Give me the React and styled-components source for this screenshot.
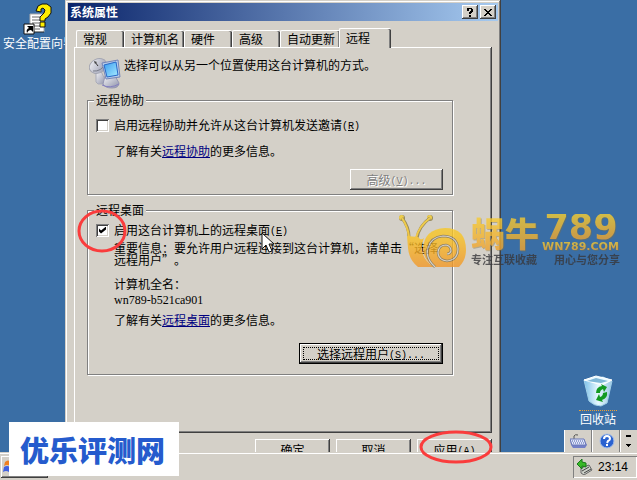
import React, { useState } from 'react';
import styled, { createGlobalStyle, css } from 'styled-components';

const App = () => {
  const [assist, setAssist] = useState(false);
  const [desktop, setDesktop] = useState(true);

  return (
    <Screen>
      <GlobalStyle />
      <Desktop>
        <IconColumn>
          <WizardIcon />
          <IconLabel>安全配置向导</IconLabel>
        </IconColumn>

        <Dialog role="dialog" aria-labelledby="dialog-title">
          <TitleBar>
            <Title id="dialog-title">系统属性</Title>
            <TitleButton aria-label="帮助">
              <svg width="8" height="9" shapeRendering="crispEdges">
                <path d="M1 0h5v1h1v3h-1v1h-1v1h-2v-2h1v-1h1v-2h-2v2h-2z M3 7h2v2h-2z" />
              </svg>
            </TitleButton>
            <TitleButton aria-label="关闭">
              <svg width="8" height="7" shapeRendering="crispEdges">
                <path d="M0 0h2v1h1v1h2v-1h1v-1h2v1h-1v1h-1v1h-1v1h1v1h1v1h1v1h-2v-1h-1v-1h-2v1h-1v1h-2v-1h1v-1h1v-1h1v-1h-1v-1h-1v-1h-1z" />
              </svg>
            </TitleButton>
          </TitleBar>

          <Tabs role="tablist">
            {['常规', '计算机名', '硬件', '高级', '自动更新', '远程'].map((name) => (
              <Tab key={name} role="tab" $active={name === '远程'} aria-selected={name === '远程'}>
                {name}
              </Tab>
            ))}
          </Tabs>

          <Panel role="tabpanel">
            <Intro>
              <RemoteIcon />
              <Line>选择可以从另一个位置使用这台计算机的方式。</Line>
            </Intro>

            <Group>
              <Legend>远程协助</Legend>
              <AssistBody>
                <CheckLabel>
                  <Check type="checkbox" checked={assist} onChange={() => setAssist(!assist)} />
                  <span>启用远程协助并允许从这台计算机发送邀请<Ascii>(<u>R</u>)</Ascii></span>
                </CheckLabel>
                <Line $indent>了解有关<Link href="#assist">远程协助</Link>的更多信息。</Line>
                <GroupButton disabled $width="93px">高级<Ascii>(<u>V</u>)...</Ascii></GroupButton>
              </AssistBody>
            </Group>

            <Group>
              <Legend>远程桌面</Legend>
              <DesktopBody>
                <CheckLabel>
                  <Check type="checkbox" checked={desktop} onChange={() => setDesktop(!desktop)} />
                  <span>启用这台计算机上的远程桌面<Ascii>(<u>E</u>)</Ascii></span>
                </CheckLabel>
                <Notice>重要信息：要允许用户远程连接到这台计算机，请单击“选择远程用户”。</Notice>
                <ComputerName>
                  <Line $indent>计算机全名：</Line>
                  <HostName>wn789-b521ca901</HostName>
                </ComputerName>
                <Line $indent>了解有关<Link href="#desktop">远程桌面</Link>的更多信息。</Line>
                <GroupButton $focused $width="144px">选择远程用户<Ascii>(<u>S</u>)...</Ascii></GroupButton>
              </DesktopBody>
            </Group>
          </Panel>

          <Actions>
            <Button $width="75px">确定</Button>
            <Button $width="75px">取消</Button>
            <Button $width="75px">应用<Ascii>(<u>A</u>)</Ascii></Button>
          </Actions>
        </Dialog>

        <TrayColumn>
          <Recycle>
            <BinIcon />
            <BinLabel>回收站</BinLabel>
          </Recycle>
          <LanguageBar>
            <LangButton aria-label="键盘"><KeyboardIcon /></LangButton>
            <LangButton aria-label="帮助"><HelpIcon /></LangButton>
            <LangMenu aria-label="选项">
              <svg width="6" height="13" shapeRendering="crispEdges">
                <path d="M0 0h5v2h-5z M0 9h5v1h-1v1h-1v1h-1v-1h-1v-1h-1z" />
              </svg>
            </LangMenu>
          </LanguageBar>
        </TrayColumn>
      </Desktop>

      <Taskbar>
        <StartButton aria-label="开始">
          <svg width="16" height="16" viewBox="0 0 16 16">
            <path d="M2 3q3-3 6 0l-1 4q-3-2-6 0z" fill="#f08020" />
            <path d="M9 3q3 2 6 0l-1 4q-3 2-6 0z" fill="#50b040" />
            <path d="M1 8q3-2 6 0l-1 5q-3-2-6 0z" fill="#4060e0" />
            <path d="M8 8q3 2 6 0l-1 5q-3 2-6 0z" fill="#f0c020" />
          </svg>
        </StartButton>
        <Clock>
          <SafeRemoveIcon />
          <Time>23:14</Time>
        </Clock>
      </Taskbar>

      <Watermark>
        <Snail />
        <Brand>蜗牛</Brand>
        <BrandSide>
          <BrandNumber>789</BrandNumber>
          <BrandUrl>WN789.COM</BrandUrl>
        </BrandSide>
        <Motto $first>专注互联收藏</Motto>
        <Motto>用心与您分享</Motto>
      </Watermark>

      <CheckRing />
      <ApplyRing />
      <Pointer width="14" height="22" viewBox="0 0 14 22">
        <path d="M1 1v16l4-4 3 7 3-1-3-7h5z" fill="#fff" stroke="#111" />
      </Pointer>
      <SiteBadge>优乐评测网</SiteBadge>
    </Screen>
  );
};

const WizardIcon = () => (
  <svg width="32" height="32" viewBox="0 0 32 32">
    <path d="M7 11h14v18H7z" fill="#fff" />
    <path d="M7 29V11h14v18" fill="none" stroke="#aaa" />
    <path d="M9 14h8M9 17h9M9 20h7M9 23h9M12 26h5" stroke="#666" />
    <path d="M21 29H9" stroke="#222" />
    <path d="M13 8l2-5 4-2h5l4 3v6l-3 4-3 2v2h-5v-4l4-4 1-3-2-2-2 1v3z" fill="#ffee00" stroke="#111" />
    <path d="M17 19h5v5h-5z" fill="#ffee00" stroke="#111" />
    <path d="M1 21h10v10H1z" fill="#fff" stroke="#111" />
    <path d="M4 30c-1-3 0-4 2-5l-2-2h6v6l-2-2c-2 0-3 1-4 3z" fill="#000" />
  </svg>
);

const RemoteIcon = () => (
  <svg width="32" height="32" viewBox="0 0 32 32">
    <defs>
      <linearGradient id="metal" x1="0" y1="0" x2="1" y2="1">
        <stop offset="0" stopColor="#f6f6f8" />
        <stop offset="1" stopColor="#8c90a8" />
      </linearGradient>
      <linearGradient id="glass" x1="0" y1="0" x2="1" y2="1">
        <stop offset="0" stopColor="#3a9cf0" />
        <stop offset="1" stopColor="#a8ecff" />
      </linearGradient>
    </defs>
    <path d="M7 15l5-1 5 11-3 2H9l-2-2z" fill="url(#metal)" stroke="#a9abb8" />
    <ellipse cx="9" cy="9" rx="9" ry="7" transform="rotate(-25 9 9)" fill="url(#metal)" stroke="#a4a6b2" />
    <path d="M4 14q8 1 13-8" fill="none" stroke="#777b88" />
    <path d="M9 9L6 5" stroke="#333" />
    <path d="M5 4l3 1-2 2z" fill="#444" />
    <path d="M16 19h10l4 7q0 5-7 5t-9-4z" fill="url(#metal)" stroke="#9496b2" />
    <path d="M13 28q8 4 17-1" fill="none" stroke="#8580c0" />
    <path d="M13 6l16-3 2 17-14 2z" fill="#b8cce8" stroke="#7585b8" />
    <path d="M15 8l12-3 2 13-11 2z" fill="url(#glass)" stroke="#2868c8" />
  </svg>
);

const BinIcon = () => (
  <svg width="32" height="32" viewBox="0 0 32 32">
    <defs>
      <linearGradient id="bin" x1="0" y1="0" x2="1" y2="0">
        <stop offset="0" stopColor="#7cc0e8" />
        <stop offset="0.5" stopColor="#e6f8ff" />
        <stop offset="1" stopColor="#9cc8e4" />
      </linearGradient>
    </defs>
    <path d="M2 5l5 21q5 5 12 5l6-3 5-22-9-4z" fill="url(#bin)" stroke="#9fcfe8" />
    <path d="M2 5L14 1l16 4-10 5z" fill="#eafaff" stroke="#fff" />
    <path d="M5 6l9-3 12 3-7 2z" fill="#80b8d8" />
    <path d="M14 18q0-6 6-7l-1-2 6 3-3 5-1-3q-3 1-3 4z" fill="#129a22" />
    <path d="M25 17q1 6-5 8l1 2-7-2 3-6 1 3q3-1 3-4z" fill="#129a22" />
  </svg>
);

const KeyboardIcon = () => (
  <svg width="17" height="16" viewBox="0 0 17 16">
    <path d="M4 6V3q1-2 4-1" fill="none" stroke="#555" />
    <path d="M0 6h14l3 6-2 3H3l-2-3z" fill="#7480c8" />
    <path d="M0 6h14l2 6H2z" fill="#dfe5fa" stroke="#6a78b8" />
    <path d="M2 8h12M3 10h12" stroke="#4b5ca8" strokeDasharray="1 1" />
  </svg>
);

const HelpIcon = () => (
  <svg width="16" height="16" viewBox="0 0 16 16">
    <circle cx="8" cy="8" r="7" fill="#2a62d0" stroke="#a8c0e8" />
    <path d="M5 6q0-3 3-3t3 3q0 1-2 2l-1 2" fill="none" stroke="#fff" strokeWidth="2" />
    <path d="M7 11h2v2H7z" fill="#fff" />
  </svg>
);

const SafeRemoveIcon = () => (
  <svg width="16" height="16" viewBox="0 0 16 16">
    <path d="M4 9l8-3 3 5-8 5-3-2z" fill="#ccd0c8" stroke="#666" />
    <path d="M5 12l7-4M7 14l7-4" stroke="#444" />
    <path d="M0 5l5-5v3l4 1v4l-4-1v3z" fill="#38b828" stroke="#187818" />
  </svg>
);

const Snail = () => (
  <SnailArt width="68" height="54" viewBox="0 0 68 54">
    <defs>
      <linearGradient id="snail" gradientUnits="userSpaceOnUse" x1="0" y1="0" x2="0" y2="54">
        <stop offset="0" stopColor="#f4cf30" />
        <stop offset="0.4" stopColor="#f9c524" />
        <stop offset="1" stopColor="#f2962a" />
      </linearGradient>
    </defs>
    <circle cx="3" cy="4" r="3" fill="#8a7a40" />
    <circle cx="31" cy="4" r="3" fill="#8a7a40" />
    <circle cx="2.5" cy="3.5" r="2.5" fill="url(#snail)" />
    <circle cx="30.5" cy="3.5" r="2.5" fill="url(#snail)" />
    <path d="M3 4q7 9 7 19M31 4Q20 12 18 24" fill="none" stroke="#8a7a40" strokeWidth="3" />
    <path d="M3 4q6 9 7 19M31 4Q20 12 17 24" fill="none" stroke="url(#snail)" strokeWidth="2" />
    <path d="M8 22l11 1 2 2q2 1 4-1l-2 6q-2 14 12 23H19Q10 46 9 34z" fill="url(#snail)" />
    <path d="M60 53q7-7 7-17 0-22-21-22-21 1-22 21 1 12 12 18z" fill="url(#snail)" />
    <path
      d="M36 53Q26 44 29 34q3-11 15-12 14 0 15 13 0 11-11 12-9-1-9-9 1-7 8-7 5 1 5 6-1 3-4 3"
      fill="none" stroke="#7c6c48" strokeWidth="2.5"
    />
    <path
      d="M36 53Q26 44 29 34q3-11 15-12 14 0 15 13 0 11-11 12-9-1-9-9 1-7 8-7 5 1 5 6-1 3-4 3"
      fill="none" stroke="#d4d0c8" strokeWidth="1.2"
    />
  </SnailArt>
);

const CheckRing = () => (
  <RingLeft width="50" height="44">
    <ellipse cx="25" cy="22" rx="23" ry="20" />
  </RingLeft>
);

const ApplyRing = () => (
  <RingRight width="74" height="34">
    <ellipse cx="37" cy="17" rx="35" ry="15" />
  </RingRight>
);

const GlobalStyle = createGlobalStyle`
  * {
    box-sizing: border-box;
  }
  body {
    margin: 0;
    background: #3a6ea5;
    color: #000;
    font: 12px/16px "Noto Sans CJK SC", sans-serif;
    text-spacing-trim: space-all;
  }
  button {
    margin: 0;
    padding: 0;
    border: 0;
    font: inherit;
    color: inherit;
    background: #d4d0c8;
  }
  svg {
    display: block;
    flex: none;
  }
`

const raised = css`
  box-shadow: inset -1px -1px #404040, inset 1px 1px #fff, inset -2px -2px #808080;
`

const Screen = styled.div`
    position: relative;
    display: flex;
    flex-direction: column;
    height: 100vh;
    overflow: hidden;
`

const Desktop = styled.main`
    flex: 1;
    min-height: 0;
    display: grid;
    grid-template-columns: 65px minmax(0, 1fr) 136px;
    grid-template-rows: minmax(0, 1fr);
    overflow: hidden;
`

const IconColumn = styled.div`
    padding: 3px 0 0 3px;
    overflow: hidden;

    svg {
      margin-left: 20px;
    }
`

const IconLabel = styled.div`
    color: #fff;
    white-space: nowrap;
`

const Dialog = styled.section`
    align-self: start;
    padding: 3px;
    background: #d4d0c8;
    box-shadow: inset -1px -1px #404040, inset 1px 1px #d4d0c8, inset -2px -2px #808080, inset 2px 2px #fff;
`

const TitleBar = styled.header`
    display: flex;
    align-items: center;
    gap: 2px;
    height: 18px;
    padding: 0 2px;
    color: #fff;
    background: linear-gradient(to right, #0a246a, #a6caf0);
`

const Title = styled.h1`
    flex: 1;
    margin: 0;
    font-size: 12px;
    line-height: 16px;
    font-weight: 700;
`

const TitleButton = styled.button`
    display: grid;
    place-items: center;
    width: 16px;
    height: 14px;
    color: #000;
    ${raised}
`

const Tabs = styled.div`
    display: flex;
    align-items: flex-end;
    height: 26px;
    padding: 0 8px;
`

const Tab = styled.button`
    min-width: 48px;
    height: 17px;
    padding: 0 5px 0 6px;
    text-align: left;
    border: solid #fff;
    border-width: 1px 0 0 1px;
    border-radius: 2px 2px 0 0;
    box-shadow: inset -1px 0 #404040, inset -2px 0 #808080;

    ${({ $active }) => $active && css`
      position: relative;
      min-width: 52px;
      height: 20px;
      margin: 0 0 -1px -1px;
      padding-bottom: 1px;
    `}
`

const Panel = styled.div`
    margin: 0 6px;
    padding: 10px 39px 58px 13px;
    ${raised}
`

const Intro = styled.div`
    display: flex;
    gap: 3px;
    height: 32px;
    margin: 0 0 3px 2px;
`

const Line = styled.div`
    padding-left: ${({ $indent }) => ($indent ? '18px' : '0')};
    white-space: nowrap;
`

const Ascii = styled.span`
    font-family: "Liberation Mono", monospace;
    font-size: 10px;
    line-height: 1px;
    vertical-align: 1px;
`

const Group = styled.fieldset`
    min-width: 0;
    margin: 0;
    padding: 0 9px 0 6px;
    border: 1px solid #808080;
    box-shadow: inset 1px 1px #fff, 1px 1px #fff;

    & + & {
      margin-top: 7px;
    }
`

const Legend = styled.legend`
    padding: 0 2px;
    background: #d4d0c8;
`

const AssistBody = styled.div`
    display: flex;
    flex-direction: column;
    gap: 10px;
    padding: 9px 0 4px 2px;
`

const DesktopBody = styled.div`
    display: flex;
    flex-direction: column;
    gap: 4px;
    padding: 4px 0 10px 2px;
`

const CheckLabel = styled.label`
    display: flex;
    align-items: center;
    gap: 5px;
    white-space: nowrap;
`

const Check = styled.input`
    appearance: none;
    width: 13px;
    height: 13px;
    margin: 0;
    background: #fff;
    box-shadow: inset 1px 1px #808080, inset -1px -1px #fff, inset 2px 2px #404040, inset -2px -2px #d4d0c8;

    &:checked::before {
      content: "";
      display: block;
      width: 7px;
      height: 7px;
      margin: 3px;
      background: #000;
      clip-path: polygon(0 29%, 29% 58%, 100% 0, 100% 43%, 29% 100%, 0 72%);
    }
`

const Link = styled.a`
    color: #000080;
`

const Notice = styled.p`
    margin: 0;
    padding-left: 18px;
    width: 343px;
    max-width: 100%;
    line-height: 12px;
`

const ComputerName = styled.div`
    padding-top: 6px;
`

const HostName = styled.div`
    padding-left: 18px;
    font-family: "Liberation Serif", serif;
`

const Button = styled.button`
    width: ${({ $width }) => $width};
    height: 21px;
    white-space: nowrap;
    ${raised}

    &:disabled {
      color: #808080;
      text-shadow: 1px 1px #fff;
    }
`

const GroupButton = styled(Button)`
    align-self: flex-end;

    ${({ $focused }) => $focused && css`
      margin-top: 11px;
      border: 1px solid #000;
      outline: 1px dotted #000;
      outline-offset: -5px;
    `}
`

const Actions = styled.footer`
    display: flex;
    justify-content: flex-end;
    gap: 6px;
    padding: 6px 6px 7px;
`

const TrayColumn = styled.div`
    display: flex;
    flex-direction: column;
    justify-content: flex-end;
    align-items: flex-end;
`

const Recycle = styled.div`
    display: flex;
    flex-direction: column;
    align-items: center;
    gap: 3px;
    margin: 0 20px 3px 0;
`

const BinLabel = styled.div`
    padding: 0 1px;
    color: #fff;
    border-top: 1px dotted #f0a030;
`

const LanguageBar = styled.div`
    display: flex;
    height: 22px;
    width: 73px;
    background: #d4d0c8;
    border-left: 1px solid #fff;
`

const LangButton = styled.button`
    display: grid;
    place-items: center;
    width: 28px;
    border-right: 1px solid #fff;
    box-shadow: inset -1px 0 #808080;
`

const LangMenu = styled.button`
    flex: 1;
    display: grid;
    place-items: center;
`

const Taskbar = styled.footer`
    display: flex;
    justify-content: space-between;
    height: 28px;
    padding: 4px 0 2px 1px;
    background: #d4d0c8;
    box-shadow: inset 0 1px #d4d0c8, inset 0 2px #fff;
`

const StartButton = styled.button`
    width: 47px;
    padding-left: 2px;
    ${raised}
`

const Clock = styled.div`
    display: flex;
    align-items: center;
    gap: 5px;
    width: 64px;
    padding-left: 4px;
    box-shadow: inset 1px 1px #808080, inset -1px -1px #fff;
`

const Time = styled.time`
    font-family: "Liberation Sans", sans-serif;
`

const goldText = css`
    color: transparent;
    background: linear-gradient(#f8d030, #eea030);
    background-clip: text;
    filter: drop-shadow(1px 1px 0 #80704080);
`

const Watermark = styled.aside`
    position: absolute;
    top: 214px;
    right: 17px;
    display: grid;
    grid-template-columns: 72px 71px 78px;
    grid-template-rows: 38px 16px;
    opacity: 0.8;
    pointer-events: none;
`

const SnailArt = styled.svg`
    grid-row: 1 / 3;
`

const Brand = styled.div`
    font-size: 34px;
    line-height: 38px;
    font-weight: 900;
    ${goldText}
`

const BrandSide = styled.div`
    font-family: "DejaVu Sans", sans-serif;
    font-weight: 700;
`

const BrandNumber = styled.div`
    font-size: 35px;
    line-height: 27px;
    text-align: center;
    ${goldText}
`

const BrandUrl = styled.div`
    font-size: 11px;
    line-height: 11px;
    ${goldText}
`

const Motto = styled.div`
    font-size: 11px;
    line-height: 14px;
    font-weight: 700;
    color: #38383c;
    text-align: ${({ $first }) => ($first ? 'left' : 'right')};
`

const ring = css`
    position: absolute;
    fill: none;
    stroke: #fa3c3c;
    stroke-width: 3px;
    pointer-events: none;
`

const RingLeft = styled.svg`
    ${ring}
    left: 77px;
    top: 209px;
`

const RingRight = styled.svg`
    ${ring}
    right: 144px;
    bottom: 16px;
`

const Pointer = styled.svg`
    position: absolute;
    left: 261px;
    top: 232px;
    pointer-events: none;
`

const SiteBadge = styled.div`
    position: absolute;
    left: 9px;
    bottom: 4px;
    padding: 0 14px 0 11px;
    font-size: 29px;
    line-height: 54px;
    font-weight: 900;
    color: #255bcd;
    background: #fff;
`

export default App;
